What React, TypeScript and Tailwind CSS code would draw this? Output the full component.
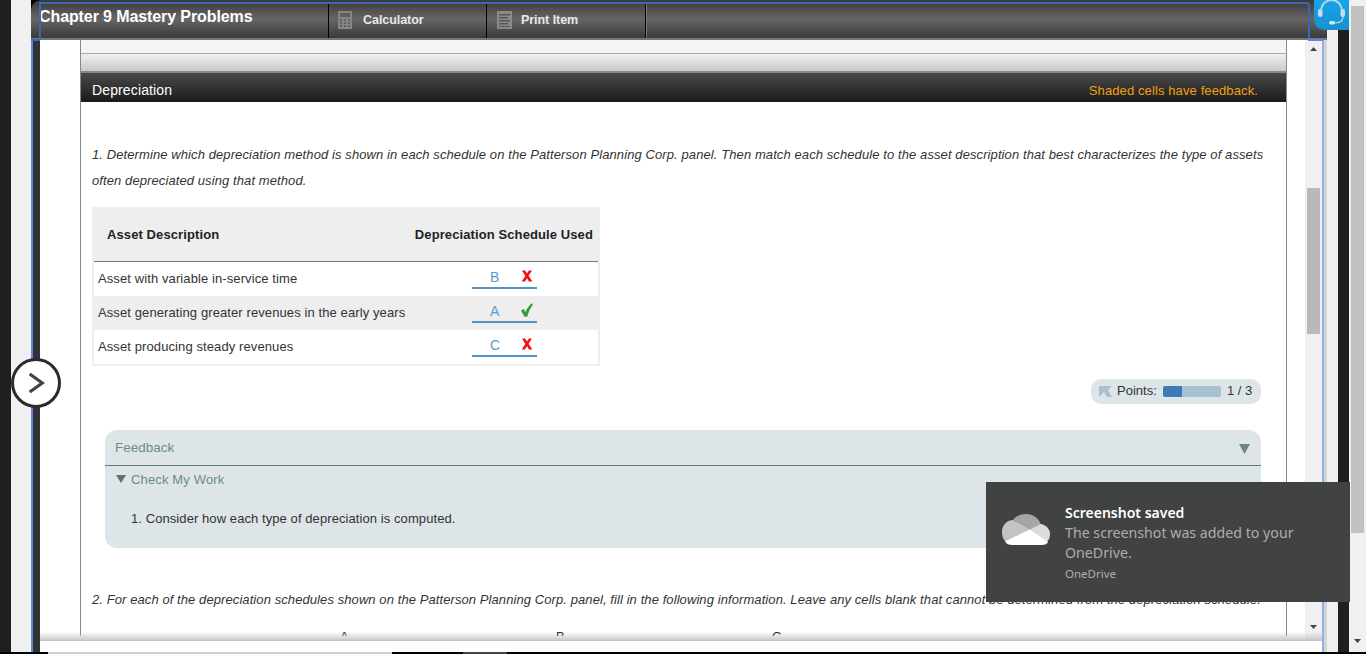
const arial = "font-['Liberation_Sans',Arial,sans-serif]";

function TriDown({ className }: { className: string }) {
  return (
    <svg viewBox="0 0 10 6" preserveAspectRatio="none" className={className} fill="currentColor">
      <path d="M0 0h10L5 6z" />
    </svg>
  );
}

function Cross() {
  return (
    <svg viewBox="0 0 12 12" className="h-[12px] w-[12px]" fill="#f40f0f">
      <path d="M1 0.5h3.2L6 3.6 7.900 0.5h3.100L7.600 5.800 11.400 11.500H8L6 8.200 3.900 11.500H0.700L4.300 5.900z" />
    </svg>
  );
}

function Tick() {
  return (
    <svg viewBox="0 0 12 14" className="h-[14px] w-[12px]" fill="#3b9a3b">
      <path d="M0 7.400 2.800 6 4.400 9C6 5.600 8 2.800 10.600 0.200L12 1.400C9.400 4.800 7.600 8.800 6.200 13.800H3.400z" />
    </svg>
  );
}

function Answer({ letter, ok }: { letter: string; ok?: boolean }) {
  return (
    <div className="relative mb-[2px] flex h-[21px] w-[65px] items-center border-b-2 border-[#5393c8] pl-[18px]">
      <span className="w-[31px] text-[14px] leading-none text-[#5b9bd0]">{letter}</span>
      <span className="mb-[3px]">{ok ? <Tick /> : <Cross />}</span>
    </div>
  );
}

function Row({ text, letter, ok, shaded }: { text: string; letter: string; ok?: boolean; shaded?: boolean }) {
  return (
    <div className={`flex h-[34px] items-center ${shaded ? "bg-[#eeeeee]" : "bg-white"}`}>
      <div className="w-[378px] pl-[4px] text-[13px] tracking-[0.1px] text-[#333]">{text}</div>
      <Answer letter={letter} ok={ok} />
    </div>
  );
}

function Header() {
  return (
    <div className="relative z-10 flex h-[40px] rounded-tl-[10px] border-b-2 border-[#777] bg-[linear-gradient(#383838,#666666_50%,#3a3a3a)] text-white">
      <div className="absolute left-[8px] top-[2px] h-[38px] w-[1271px] rounded-tr-[4px] border-x-2 border-t-2 border-[#3f66b0]" />
      <div className="absolute left-0 top-[39px] h-[2px] w-[9px] bg-[#3f66b0]" />
      <div className="absolute left-[1277px] top-[39px] h-[2px] w-[15px] bg-[#5f86d8]" />
      <div className="w-[297px] pl-[8px] pt-[7px] text-[16px] font-bold leading-[20px] tracking-[-0.1px]">
        Chapter 9 Mastery Problems
      </div>
      <Tool label="Calculator" width="w-[158px]" icon="calc" />
      <Tool label="Print Item" width="w-[159px]" icon="print" />
      <div className="mt-[3px] h-[35px] w-[2px] border-l border-r border-l-black border-r-[#777]" />
    </div>
  );
}

function Tool({ label, width, icon }: { label: string; width: string; icon: "calc" | "print" }) {
  return (
    <div className={`mt-[3px] flex h-[35px] items-center border-l border-black pb-[1px] ${width} ${icon === "calc" ? "gap-[11px] pl-[9px]" : "gap-[9px] pl-[10px]"}`}>
      {icon === "calc" ? (
        <svg viewBox="0 0 14 18" className="h-[18px] w-[14px]">
          <rect width="14" height="18" fill="#868686" />
          <rect x="2" y="2" width="10" height="4" fill="#5e5e5e" />
          <path d="M2 8h2v2H2zM6 8h2v2H6zM10 8h2v2h-2zM2 11h2v2H2zM6 11h2v2H6zM10 11h2v2h-2zM2 14h2v2H2zM6 14h2v2H6zM10 14h2v2h-2z" fill="#616161" />
        </svg>
      ) : (
        <svg viewBox="0 0 15 18" className="h-[18px] w-[15px]">
          <rect width="15" height="18" fill="#8a8a8a" />
          <path d="M2 3h11v1.500H2zM2 6h9v1.500H2zM2 9h11v1.500H2zM2 12h9v1.500H2zM2 15h11v1H2z" fill="#565656" />
        </svg>
      )}
      <span className="text-[12.5px] font-bold leading-none tracking-[-0.05px] text-[#e8e8e8]">{label}</span>
    </div>
  );
}

function Scrollbar() {
  return (
    <div className="flex w-[17px] flex-col items-center bg-[#f0f0f0]">
      <TriDown className="mt-[7px] h-[4px] w-[7px] rotate-180 text-[#444]" />
      <div className="mt-[137px] h-[146px] w-[13px] bg-[#b9b9b9]" />
      <TriDown className="mt-[291px] h-[4px] w-[7px] text-[#444]" />
    </div>
  );
}

function Feedback() {
  return (
    <div className="ml-[24px] mt-[26px] h-[118px] w-[1156px] rounded-[12px] bg-[#dde5e8]">
      <div className="flex h-[36px] items-center justify-between border-b border-[#5d7f82] pl-[10px] pr-[11px] pt-[2px] text-[13.5px] text-[#6d8b8a]">
        <span>Feedback</span>
        <TriDown className="h-[10px] w-[11px] text-[#6d8585]" />
      </div>
      <div className="flex h-[26px] items-center gap-[5px] pl-[11px] text-[13px] leading-none text-[#6d8b8a]">
        <TriDown className="h-[8px] w-[10px] text-[#5f7272]" />
        <span className="tracking-[0.15px]">Check My Work</span>
      </div>
      <div className="pl-[26px] pt-[17px] text-[13px] leading-[20px] tracking-[0.08px] text-[#333]">
        1. Consider how each type of depreciation is computed.
      </div>
    </div>
  );
}

function Toast() {
  return (
    <div className="absolute left-[986px] top-[482px] z-20 flex h-[120px] w-[364px] bg-[#414242] font-['Noto_Sans',sans-serif]">
      <svg viewBox="0 0 48 32" className="ml-[16px] mt-[32px] h-[32px] w-[48px]">
        <path d="M11 6C14 2 19 0 24 0c7 0 13 4 15 11-2 0-4 1-6 2l-5 2L11 6z" fill="#a6a6a6" />
        <path d="M11 6c-6 0-11 5-11 12 0 4 1 7 3 9l25-12z" fill="#c4c4c4" />
        <path d="M39 10c5 1 9 5 9 10 0 3-1 6-3 8L28 15z" fill="#dcdcdc" />
        <path d="M28 15 3 27c1 3 4 4 7 4h30c3 0 5-1 6-3z" fill="#ffffff" />
      </svg>
      <div className="ml-[15px] pt-[21px]">
        <div className="text-[14px] font-semibold leading-[20px] text-white">Screenshot saved</div>
        <div className="w-[250px] text-[14.2px] leading-[20px] text-[#adadad]">
          The screenshot was added to your OneDrive.
        </div>
        <div className="mt-[2px] text-[11.5px] leading-[18px] text-[#adadad]">OneDrive</div>
      </div>
    </div>
  );
}

export default function App() {
  return (
    <div className={`relative h-[654px] w-[1366px] overflow-hidden bg-black ${arial}`}>
      <div className="flex h-[652px]">
        <div className="w-[11px] bg-[#1f1f1f]" />
        <div className="w-[20px] bg-[#f0f0f0]" />
        <div className="flex w-[1296px] flex-col">
          <Header />
          <div className="flex flex-1 overflow-hidden bg-white">
            <div className="w-[9px] border-l-2 border-[#5f86d8] bg-[#333333]" />
            <div className="w-[40px] bg-white" />
            <div className="h-[596px] w-[1207px] overflow-hidden border-x border-[#888] bg-white">
              <div className="h-[14px] border-b border-[#aaaaaa] bg-[#f3f5f4]" />
              <div className="h-[17px] bg-[linear-gradient(#f0f0f0,#c9c9c9)]" />
              <div className="flex h-[31px] items-center justify-between border-t-2 border-[#888] bg-[linear-gradient(#4a4a4a,#1a1a1a)] pl-[11px] pr-[28px] pt-[6px]">
                <span className="text-[14px] tracking-[0.13px] text-white">Depreciation</span>
                <span className="text-[13px] tracking-[0.11px] text-[#f0a010]">Shaded cells have feedback.</span>
              </div>
              <p className="ml-[11px] mt-[40px] w-[1180px] text-[13px] italic leading-[26px] tracking-[0.095px] text-[#333]">
                1. Determine which depreciation method is shown in each schedule on the Patterson Planning Corp. panel. Then match each schedule to the asset description that best characterizes the type of assets often depreciated using that method.
              </p>
              <div className="ml-[11px] mt-[13px] w-[508px] border-2 border-t-0 border-[#eeeeee]">
                <div className="flex h-[55px] items-center justify-between border-b border-[#777] bg-[#eeeeee] pl-[13px] pr-[5px] pt-[2px] text-[13px] font-bold tracking-[0.1px] text-[#222]">
                  <span>Asset Description</span>
                  <span>Depreciation Schedule Used</span>
                </div>
                <Row text="Asset with variable in-service time" letter="B" />
                <Row text="Asset generating greater revenues in the early years" letter="A" ok shaded />
                <Row text="Asset producing steady revenues" letter="C" />
              </div>
              <div className="ml-[1010px] mt-[13px] flex h-[25px] w-[170px] items-center rounded-[10px] bg-[#dde5e8] pl-[8px] text-[13px] text-[#333]">
                <svg viewBox="0 0 13 11" className="h-[11px] w-[13px]">
                  <path d="M0 0h13L9 4l4 7H8L5 6 0 11z" fill="#a8c0d0" />
                </svg>
                <span className="mb-[2px] ml-[5px] w-[46px]">Points:</span>
                <div className="h-[11px] w-[58px] overflow-hidden rounded-[2px] bg-[#a7c0d2]">
                  <div className="h-full w-[19px] bg-[#3d7ab8]" />
                </div>
                <span className="mb-[2px] ml-[6px]">1 / 3</span>
              </div>
              <Feedback />
              <p className="ml-[11px] mt-[42px] whitespace-nowrap text-[13px] italic leading-[20px] tracking-[0.085px] text-[#333]">
                2. For each of the depreciation schedules shown on the Patterson Planning Corp. panel, fill in the following information. Leave any cells blank that cannot be determined from the depreciation schedule.
              </p>
              <div className="ml-[11px] mt-[17px] flex text-[13px] leading-[20px] text-[#222]">
                <span className="ml-[248px] w-[216px]">A</span>
                <span className="w-[216px]">B</span>
                <span>C</span>
              </div>
            </div>
            <div className="w-[18px] bg-white" />
            <Scrollbar />
            <div className="w-[5px] border-l-2 border-[#8fb0e8] bg-[#d4d4d4]" />
          </div>
        </div>
        <div className="w-[11px] bg-[#f0f0f0]" />
        <div className="w-[11px] bg-[#1f1f1f]" />
        <div className="flex w-[17px] flex-col items-center bg-[#f0f0f0]">
          <div className="mt-[6px] h-[527px] w-[13px] bg-[#c1c1c1]" />
          <TriDown className="mt-[106px] h-[4px] w-[7px] text-[#444]" />
        </div>
      </div>
      <div className="flex h-[2px]">
        <div className="ml-[48px] w-[344px] bg-[#d0d0d0]" />
        <div className="ml-[71px] w-[44px] bg-[#444]" />
      </div>

      <div className="absolute left-[40px] top-[632px] h-[20px] w-[1282px]">
        <div className="h-[9px] bg-[linear-gradient(#ffffff00,#c4c4c4)]" />
        <div className="h-[11px] bg-white" />
      </div>

      <button className="absolute left-[11px] top-[358px] z-10 flex h-[50px] w-[50px] items-center justify-center rounded-full border-[3px] border-[#2b2b2b] bg-white">
        <svg viewBox="0 0 20 24" className="h-[22px] w-[18px]" fill="none" stroke="#444" strokeWidth="3.500">
          <path d="M3 2l14 10L3 22" />
        </svg>
      </button>

      <div className="absolute left-[1314px] top-0 z-10 h-[30px] w-[35px] rounded-bl-[10px] bg-[linear-gradient(#14a5e6,#1b8fd0)]">
        <svg viewBox="0 0 35 30" className="h-[30px] w-[35px]" fill="none">
          <path d="M7 12C7 4 12 0 17.500 0S28 4 28 12" stroke="#b4d8ec" strokeWidth="1.800" />
          <rect x="4" y="9" width="4.500" height="8" rx="2" fill="#c9dbe4" />
          <rect x="26.500" y="9" width="4.500" height="8" rx="2" fill="#c9dbe4" />
          <path d="M29 17c0 4-3 6-9 6" stroke="#b4d8ec" strokeWidth="1.200" />
          <rect x="15" y="21" width="6" height="3.500" rx="1.700" fill="#d8e6ee" />
        </svg>
      </div>

      <Toast />
    </div>
  );
}
